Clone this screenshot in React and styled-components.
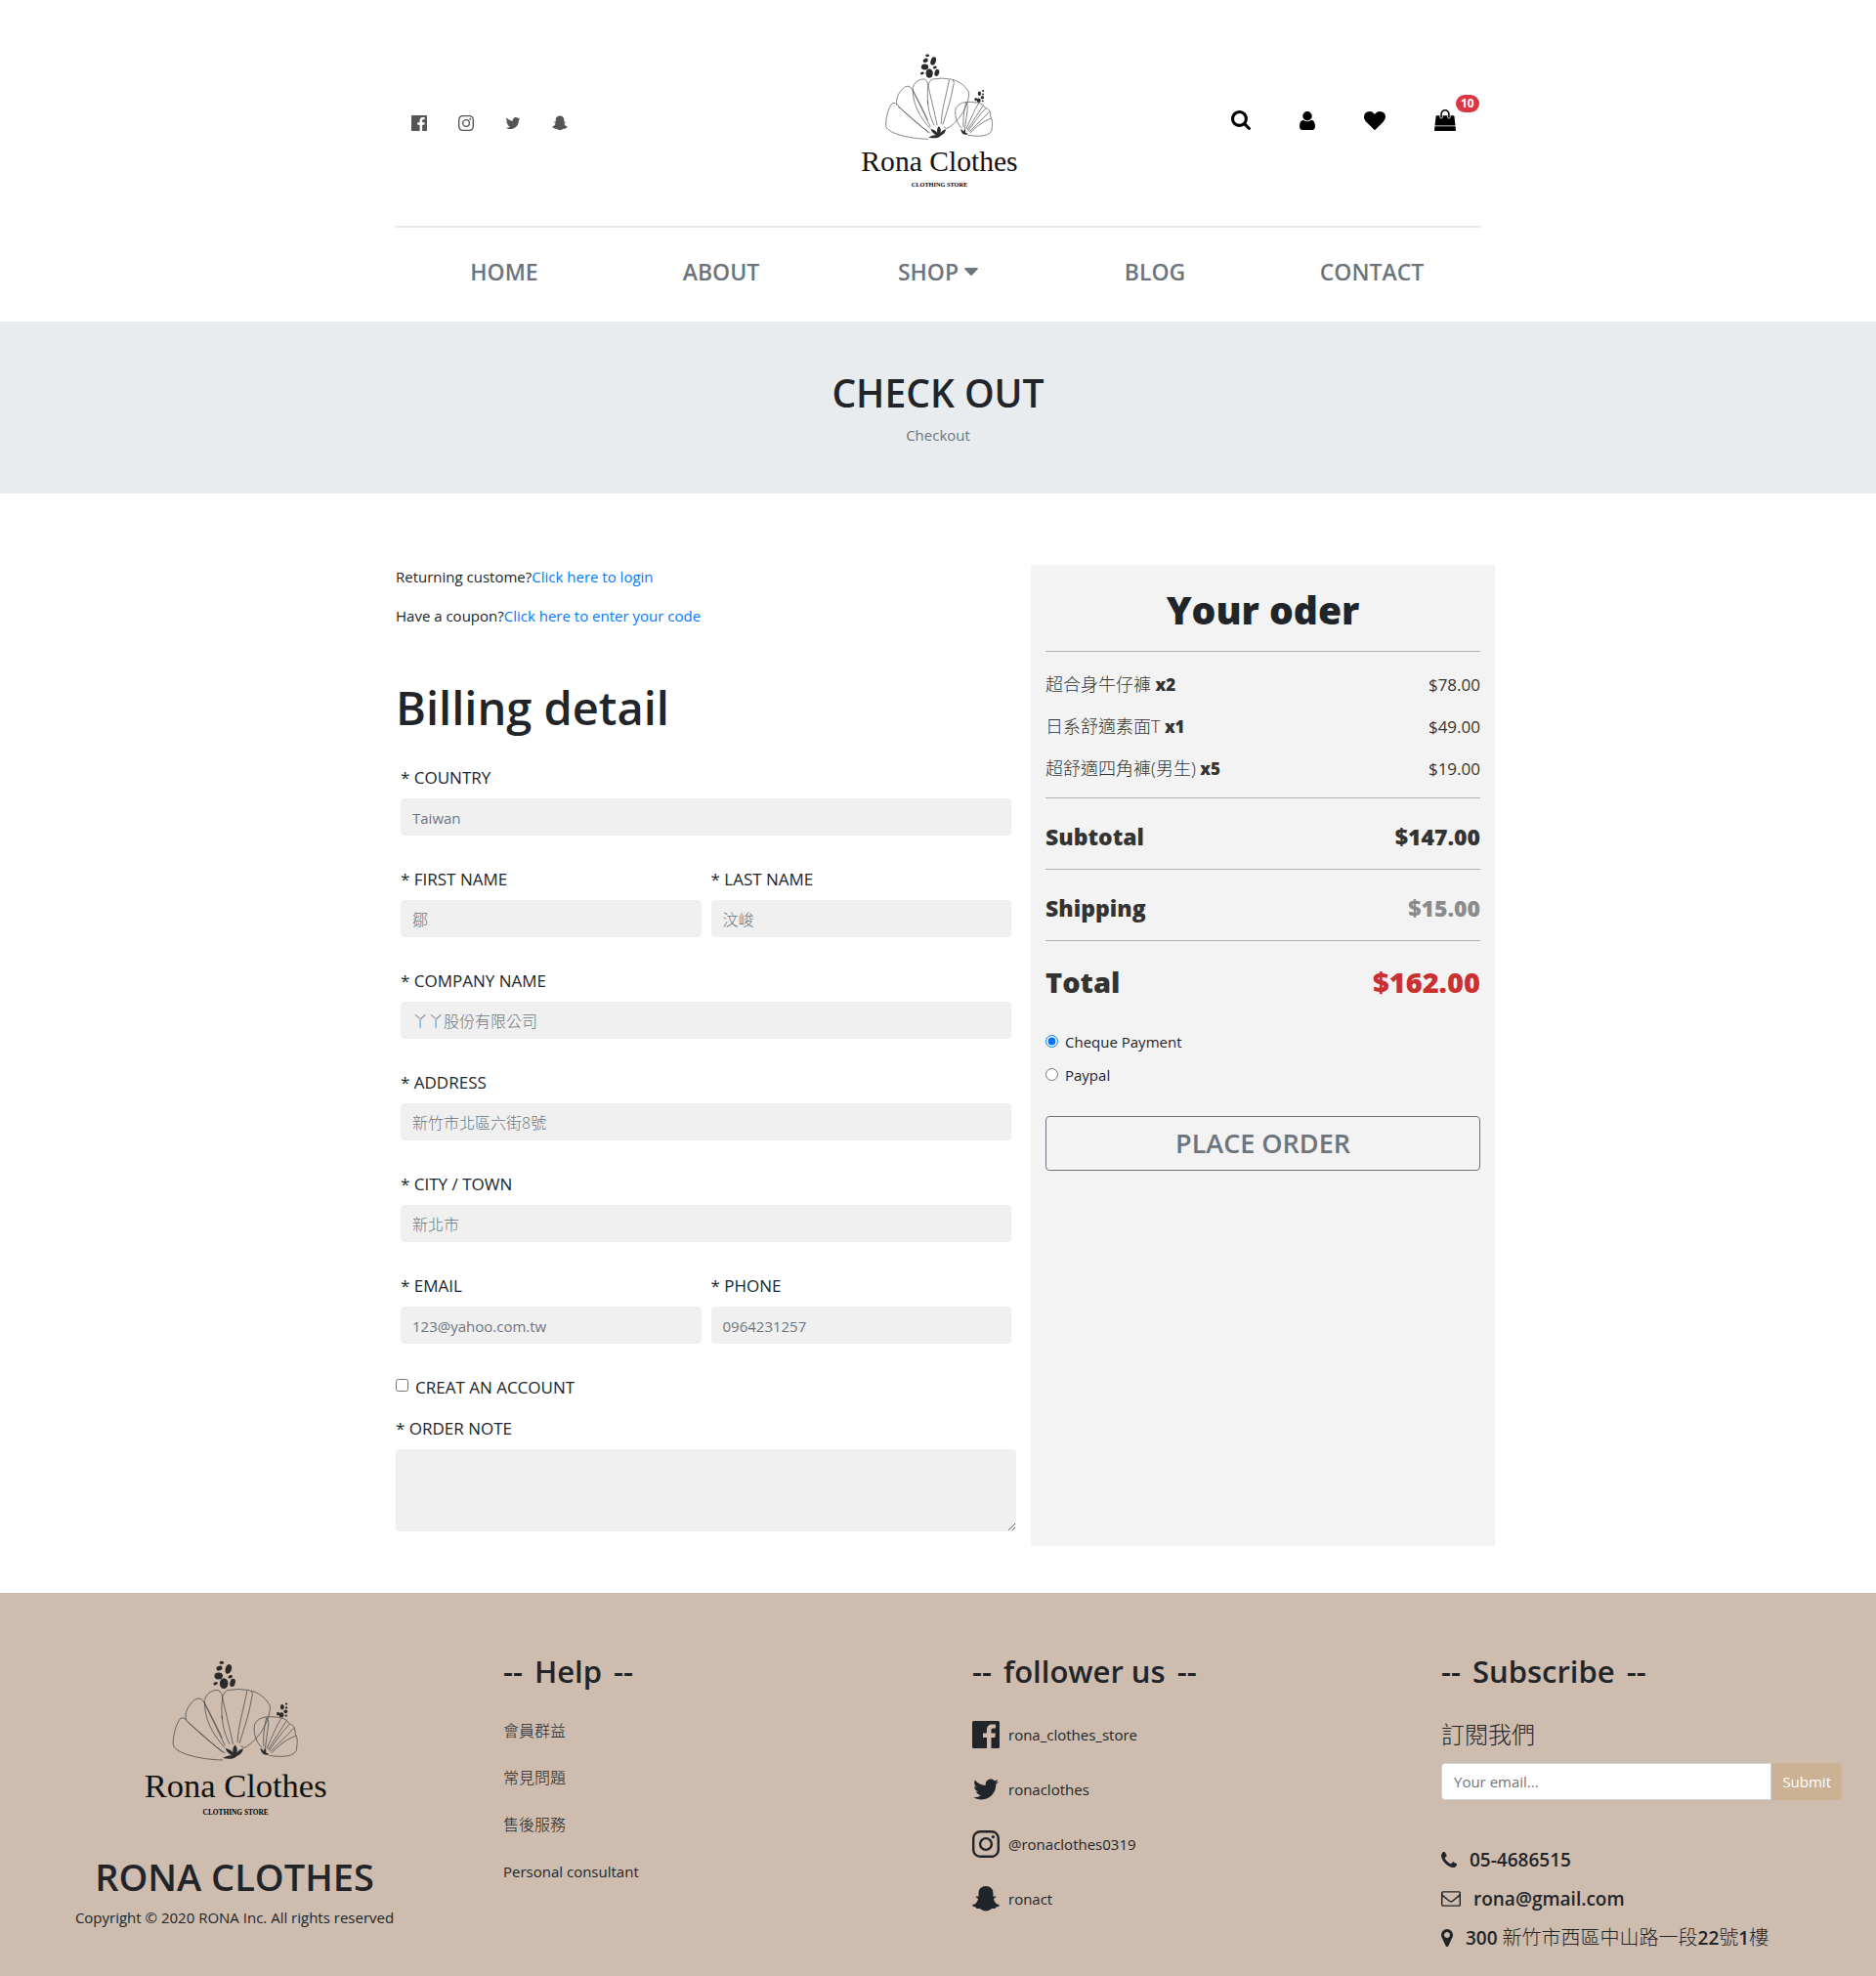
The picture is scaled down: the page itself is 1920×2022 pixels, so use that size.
import React, { useState } from "react";
import styled, { createGlobalStyle } from "styled-components";
import { IoLogoTwitter } from "react-icons/io";

const GlobalStyle = createGlobalStyle`
  *, *::before, *::after { box-sizing: border-box; }
  body {
    margin: 0;
    background: #fff;
    color: #212529;
    font-family: "Segoe UI", "Open Sans", "Noto Sans CJK TC", sans-serif;
    font-size: 15px;
    line-height: 24px;
  }
  h1, h2, h3, p, ul { margin: 0; padding: 0; }
  ul { list-style: none; }
  a { color: inherit; text-decoration: none; }
  button, input, textarea { font: inherit; }
`;

/* ---------- drawings ---------- */

const glyphs = {
  search: {
    box: "64 128 1664 1664",
    d: "M1216 832q0-185-131.5-316.5t-316.5-131.5-316.5 131.5-131.5 316.5 131.5 316.5 316.5 131.5 316.5-131.5 131.5-316.5zm512 832q0 52-38 90t-90 38q-54 0-90-38l-343-342q-179 124-399 124-143 0-273.5-55.5t-225-150-150-225-55.5-273.5 55.5-273.5 150-225 225-150 273.5-55.5 273.5 55.5 225 150 150 225 55.5 273.5q0 220-124 399l343 343q37 37 37 90z",
  },
  user: {
    box: "256 128 1280 1536",
    d: "M1536 1399q0 109-62.5 187t-150.5 78h-854q-88 0-150.5-78t-62.5-187q0-85 8.5-160.5t31.5-152 58.5-131 94-89 134.5-34.5q131 128 313 128t313-128q76 0 134.5 34.5t94 89 58.5 131 31.5 152 8.5 160.5zm-256-887q0 159-112.5 271.5t-271.5 112.5-271.5-112.5-112.5-271.5 112.5-271.5 271.5-112.5 271.5 112.5 112.5 271.5z",
  },
  heart: {
    box: "0 128 1792 1536",
    d: "M896 1664q-26 0-44-18l-624-602q-10-8-27.5-26t-55.5-65.5-68-97.5-53.5-121-23.5-138q0-220 127-344t351-124q62 0 126.5 21.5t120 58 95.5 68.5 76 68q36-36 76-68t95.5-68.5 120-58 126.5-21.5q224 0 351 124t127 344q0 221-229 450l-623 600q-18 18-44 18z",
  },
  bag: {
    box: "0 0 1792 1792",
    d: "M1757 1408l35 313q3 28-16 50-19 21-48 21h-1664q-29 0-48-21-19-22-16-50l35-313h1722zm-93-839l86 775h-1708l86-775q3-24 21-40.5t43-16.5h256v128q0 53 37.5 90.5t90.5 37.5 90.5-37.5 37.5-90.5v-128h384v128q0 53 37.5 90.5t90.5 37.5 90.5-37.5 37.5-90.5v-128h256q25 0 43 16.5t21 40.5zm-384-185v256q0 26-19 45t-45 19-45-19-19-45v-256q0-106-75-181t-181-75-181 75-75 181v256q0 26-19 45t-45 19-45-19-19-45v-256q0-159 112.5-271.5t271.5-112.5 271.5 112.5 112.5 271.5z",
  },
  phone: {
    box: "192 128 1408 1408",
    d: "M1600 1240q0 27-10 70.5t-21 68.5q-21 50-122 106-94 51-186 51-27 0-53-3.5t-57.5-12.5-47-14.5-55.5-20.5-49-18q-98-35-175-83-127-79-264-216t-216-264q-48-77-83-175-3-9-18-49t-20.5-55.5-14.5-47-12.5-57.5-3.5-53q0-92 51-186 56-101 106-122 25-11 68.5-21t70.5-10q14 0 21 3 18 6 53 76 11 19 30 54t35 63.5 31 53.5q3 4 17.5 25t21.5 35.5 7 28.5q0 20-28.5 50t-62 55-62 53-28.5 46q0 9 5 22.5t8.5 20.5 14 24 11.5 19q76 137 174 235t235 174q2 1 19 11.5t24 14 20.5 8.5 22.5 5q18 0 46-28.5t53-62 55-62 50-28.5q14 0 28.5 7t35.5 21.5 25 17.5q25 15 53.5 31t63.5 35 54 30q70 35 76 53 3 7 3 21z",
  },
  envelope: {
    box: "0 256 1792 1408",
    d: "M1664 1504v-768q-32 36-69 66-268 206-426 338-51 43-83 67t-86.5 48.5-102.5 24.5h-2q-48 0-102.5-24.5t-86.5-48.5-83-67q-158-132-426-338-37-30-69-66v768q0 13 9.5 22.5t22.5 9.5h1472q13 0 22.5-9.5t9.5-22.5zm0-1051v-24.5l-.5-13-3-12.5-5.5-9-9-7.5-14-2.5h-1472q-13 0-22.5 9.5t-9.5 22.5q0 168 147 284 193 152 401 317 6 5 35 29.5t46 37.5 44.5 31.5 50.5 27.5 43 9h2q20 0 43-9t50.5-27.5 44.5-31.5 46-37.5 35-29.5q208-165 401-317 54-43 100.5-115.5t46.5-131.5zm128-37v1088q0 66-47 113t-113 47h-1472q-66 0-113-47t-47-113v-1088q0-66 47-113t113-47h1472q66 0 113 47t47 113z",
  },
  marker: {
    box: "384 128 1024 1536",
    d: "M1152 640q0-106-75-181t-181-75-181 75-75 181 75 181 181 75 181-75 75-181zm256 0q0 109-33 179l-364 774q-16 33-47.5 52t-67.5 19-67.5-19-46.5-52l-365-774q-33-70-33-179 0-212 150-362t362-150 362 150 150 362z",
  },
};

const Svg = styled.svg`
  display: block;
  flex: none;
  fill: currentColor;
`;

function Glyph({ name, width, height }) {
  return (
    <Svg viewBox={glyphs[name].box} width={width} height={height} aria-hidden="true">
      <path d={glyphs[name].d} />
    </Svg>
  );
}

function Facebook() {
  return (
    <Svg viewBox="0 0 28 28" width="1em" height="1em" aria-hidden="true">
      <path
        fillRule="evenodd"
        d="M1.5 0h25A1.5 1.5 0 0 1 28 1.5v25a1.5 1.5 0 0 1-1.500 1.500h-7V17h3.800l.6-4.500h-4.400V9.800c0-1.300.5-2.200 2.300-2.200H24v-4c-.4-.1-1.800-.2-3.400-.2-3.400 0-5.700 2-5.700 5.800v3.300H11V17h4v11H1.500A1.500 1.500 0 0 1 0 26.500v-25A1.500 1.500 0 0 1 1.500 0z"
      />
    </Svg>
  );
}

function Instagram() {
  return (
    <Svg viewBox="0 0 28 28" width="1em" height="1em" aria-hidden="true">
      <g fill="none" stroke="currentColor" strokeWidth="2.400">
        <rect x="1.200" y="1.200" width="25.600" height="25.600" rx="7" />
        <circle cx="14" cy="14" r="5.900" />
      </g>
      <circle cx="21.400" cy="6.600" r="1.600" />
    </Svg>
  );
}

function Snapchat() {
  return (
    <Svg viewBox="0 -1 30 30" width="1em" height="1em" overflow="visible" aria-hidden="true">
      <path d="M15 0c4.800 0 8 3 8 8v3.500c1 .2 2-.6 3 .1.600 1-1.500 1.800-2.600 2.300.8 3.600 3 6 6.300 6.900.6.8-.9 1.900-3.700 2.400-.5.5-.3 1.500-1 1.500-1.500 0-3-.3-4.300.6C19 26.300 17.300 27.500 15 27.500s-4-1.200-5.700-2.200c-1.300-.9-2.800-.6-4.300-.6-.7 0-.5-1-1-1.500C1.200 22.700-.3 21.600.3 20.800 3.600 19.900 5.800 17.500 6.600 13.900 5.500 13.400 3.400 12.600 4 11.600c1-.7 2 .1 3-.1V8c0-5 3.200-8 8-8z" />
    </Svg>
  );
}

function Logo({ width, height }) {
  return (
    <Svg viewBox="56 40 490 420" width={width} height={height} role="img" aria-label="Rona Clothes">
      <g fill="#2b2b2b">
        <ellipse cx="267" cy="51" rx="6" ry="4" />
        <ellipse cx="261" cy="66" rx="8" ry="6" transform="rotate(-20 261 66)" />
        <ellipse cx="285" cy="68" rx="8" ry="13" transform="rotate(18 285 68)" />
        <ellipse cx="259" cy="86" rx="11" ry="9" />
        <ellipse cx="290" cy="88" rx="6" ry="4" transform="rotate(-20 290 88)" />
        <ellipse cx="251" cy="106" rx="6" ry="4" transform="rotate(-20 251 106)" />
        <ellipse cx="273" cy="106" rx="11" ry="14" />
        <ellipse cx="296" cy="104" rx="7" ry="11" transform="rotate(15 296 104)" />
        <ellipse cx="438" cy="160" rx="3" ry="3" />
        <ellipse cx="427" cy="168" rx="5" ry="7" />
        <ellipse cx="438" cy="170" rx="3" ry="3" />
        <ellipse cx="436" cy="180" rx="5" ry="5" />
        <ellipse cx="416" cy="186" rx="4" ry="5" />
        <ellipse cx="425" cy="189" rx="6" ry="7" />
        <ellipse cx="437" cy="191" rx="3" ry="3" />
        <path d="M270 303q16-9 24-7-14-8-17-19 15 3 20 12-2-13 5-21 9 9 5 21 8-10 17-11-2 14-16 19-10 12-38 6z" />
        <path d="M369 278q7 1 9 7l3-9q5 6 3 13 5 0 8 4-18 7-23-15z" />
      </g>
      <g fill="none" stroke="#4a4a4a" strokeWidth="2">
        <path d="M270 308C210 307 139 290 139 265C139 238 149 206 160 197Q168 194 176 206L270 288" />
        <path d="M176 206Q234 262 276 290" />
        <path d="M174 204C168 186 176 166 196 149Q211 139 221 156L276 270" />
        <path d="M221 156C244 200 258 226 268 250" />
        <path d="M222 150C226 136 234 130 243 126Q261 118 267 134C276 176 289 226 297 266" />
        <path d="M222 150C220 196 242 240 276 276" />
        <path d="M268 200C266 150 268 132 282 124Q310 118 340 124Q352 128 347 142C340 186 326 226 314 264" />
        <path d="M268 190C270 226 278 244 288 266M334 126C326 170 310 220 309 262" />
        <path d="M345 125C370 132 388 150 395 166C394 196 378 240 334 272Q324 280 318 270" />
        <path d="M374 276C356 260 350 232 354 214C366 190 396 192 424 197Q440 200 445 212C460 216 462 228 461 240C470 250 466 268 464 284C452 302 420 300 392 296" />
        <path d="M378 272C376 246 380 214 386 196Q394 204 388 232L382 278M386 278C400 246 412 218 424 199M438 205L390 280M392 284C414 252 430 230 446 214M458 224L396 286M398 290C420 268 440 252 464 244" />
      </g>
      <text x="304" y="405" textAnchor="middle" fontFamily="Liberation Serif, Times New Roman, serif" fontSize="89" fill="#111">
        Rona Clothes
      </text>
      <text x="304" y="453" textAnchor="middle" fontFamily="Liberation Serif, Times New Roman, serif" fontWeight="700" fontSize="19" fill="#000">
        CLOTHING STORE
      </text>
    </Svg>
  );
}

/* ---------- header ---------- */

const Container = styled.div`
  width: 100%;
  max-width: 1140px;
  margin: 0 auto;
  padding: 0 15px;
`;

const TopBar = styled.div`
  display: grid;
  grid-template-columns: 1fr auto 1fr;
  align-items: center;
  padding: 53px 0 38px;
  border-bottom: 2px solid #e6e6e6;
`;

const SocialLinks = styled.div`
  display: flex;
  gap: 32px;
  padding: 6px 0 0 16px;
  color: #555;
  font-size: 16px;

  svg { display: block; }
`;

const Actions = styled.div`
  display: flex;
  justify-content: flex-end;
  align-items: center;
  gap: 50px;
  padding-right: 25px;
  color: #000;
`;

const CartLink = styled.a`
  position: relative;
`;

const Badge = styled.span`
  position: absolute;
  left: 22px;
  top: -15px;
  padding: 0 5px;
  border-radius: 10px;
  background: #dc3545;
  color: #fff;
  font-size: 12px;
  font-weight: 700;
  line-height: 18px;
`;

const Nav = styled.nav`
  display: grid;
  grid-template-columns: repeat(5, 1fr);
  padding: 27px 0 33px;
`;

const NavLink = styled.a`
  display: flex;
  justify-content: center;
  align-items: center;
  gap: 6px;
  color: #6c757d;
  font-size: 23px;
  font-weight: 600;
  line-height: 36px;
`;

/* ---------- banner ---------- */

const Banner = styled.section`
  padding: 50px 15px 48px;
  background: #e8ecef;
  text-align: center;
`;

const Title = styled.h1`
  margin-bottom: 8px;
  font-size: 39px;
  font-weight: 600;
  line-height: 46px;
`;

const Crumb = styled.p`
  color: #6c757d;
`;

/* ---------- billing form ---------- */

const Checkout = styled.main`
  display: grid;
  grid-template-columns: 7fr 5fr;
  width: 100%;
  max-width: 1140px;
  margin: 0 auto;
  padding: 73px 0 48px;
`;

const Billing = styled.form`
  padding: 0 15px;
`;

const Hint = styled.p`
  margin-bottom: 16px;

  a { color: #007bff; }
`;

const BillingTitle = styled.h2`
  padding: 36px 0 28px;
  font-size: 47px;
  font-weight: 600;
  line-height: 60px;
`;

const FormRow = styled.div`
  display: flex;
  gap: 10px;
  padding: 0 5px 31px;
`;

const Field = styled.div`
  flex: 1 1 0;
  min-width: 0;
`;

const Label = styled.label`
  display: block;
  margin-bottom: 8px;
  font-size: 17px;
  line-height: 27px;
`;

const TextInput = styled.input`
  display: block;
  width: 100%;
  height: 38px;
  padding: 7px 12px 6px;
  border: 0;
  border-radius: 4px;
  background: #f0f0f0;
  color: #495057;
  font-size: ${(p) => (p.$cjk ? "16px" : "15px")};
  font-weight: ${(p) => (p.$cjk ? 300 : 400)};

  &::placeholder { color: #6c757d; opacity: 1; }
`;

const CheckRow = styled.div`
  display: flex;
  align-items: center;
  gap: 7px;
  margin-bottom: 15px;
  font-size: 17px;
  line-height: 27px;

  input { width: 13px; height: 13px; margin: 0 0 5px; }
`;

const Note = styled.textarea`
  display: block;
  width: 100%;
  height: 84px;
  margin-bottom: 15px;
  padding: 6px 12px;
  border: 0;
  border-radius: 4px;
  background: #f0f0f0;
  resize: vertical;
`;

/* ---------- order summary ---------- */

const Order = styled.aside`
  padding: 22px 15px;
  background: #f3f3f3;
  color: #333;
`;

const OrderTitle = styled.h2`
  padding-bottom: 18px;
  border-bottom: 1px solid #b0b0b0;
  color: #212529;
  font-size: 39px;
  font-weight: 800;
  line-height: 48px;
  text-align: center;
`;

const Items = styled.ul`
  display: grid;
  gap: 16px;
  padding: 20px 0 16px;
  border-bottom: 1px solid #b0b0b0;
  font-size: 17px;
  line-height: 27px;
`;

const Item = styled.li`
  display: flex;
  justify-content: space-between;
  height: 27px;

  b { font-weight: 800; }
`;

const Sum = styled.div`
  display: flex;
  justify-content: space-between;
  padding: 21px 0 15px;
  border-bottom: ${(p) => (p.$grand ? "0" : "1px solid #b0b0b0")};
  font-size: ${(p) => (p.$grand ? "29px" : "23px")};
  font-weight: 800;
  line-height: ${(p) => (p.$grand ? "42px" : "36px")};
`;

const Amount = styled.span`
  color: ${(p) => p.$color || "inherit"};
`;

const Payments = styled.div`
  display: grid;
  gap: 10px;
  padding: 13px 0 30px;
  color: #212529;
`;

const Payment = styled.label`
  display: flex;
  align-items: center;
  gap: 7px;

  input { width: 13px; height: 13px; margin: 0 0 2px; accent-color: #0075ff; }
`;

const PlaceOrder = styled.button`
  display: block;
  width: 100%;
  padding: 6px 12px;
  border: 1px solid #6c757d;
  border-radius: 4px;
  background: transparent;
  color: #6c757d;
  font-size: 27px;
  font-weight: 600;
  line-height: 42px;
`;

/* ---------- footer ---------- */

const Footer = styled.footer`
  display: grid;
  grid-template-columns: repeat(4, 1fr);
  padding: 61px 0 27px;
  background: #cebcae;
`;

const Column = styled.section`
  padding: 0 35px;
`;

const Brand = styled(Column)`
  display: flex;
  flex-direction: column;
  align-items: center;
  padding-top: 6px;
`;

const BrandName = styled.h2`
  margin: 36px 0 6px;
  font-size: 38px;
  font-weight: 600;
  line-height: 48px;
`;

const FooterTitle = styled.h3`
  display: flex;
  gap: 12px;
  margin-bottom: 30px;
  font-size: 31px;
  font-weight: 600;
  line-height: 38px;

  &::before, &::after { content: "--"; }
`;

const LinkList = styled.ul`
  display: grid;
  gap: 24px;
`;

const FollowLink = styled.a`
  display: flex;
  align-items: center;
  gap: 9px;
  line-height: 32px;

  svg { flex: none; font-size: 28px; }
`;

const Invite = styled.label`
  display: block;
  margin-bottom: 15px;
  font-family: "Noto Sans CJK TC", sans-serif;
  font-size: 24px;
  font-weight: 300;
  line-height: 30px;
`;

const Subscribe = styled.form`
  display: flex;
  margin-bottom: 49px;

  input {
    flex: 1;
    min-width: 0;
    height: 38px;
    padding: 6px 12px;
    border: 1px solid #ced4da;
    border-radius: 4px 0 0 4px;
    background: #fff;
  }
  input::placeholder { color: #6c757d; opacity: 1; }

  button {
    padding: 6px 11px;
    border: 0;
    border-radius: 0 4px 4px 0;
    background: #cbb294;
    color: #fff;
  }
`;

const Contacts = styled.ul`
  display: grid;
  gap: 16px;
  font-size: 19px;
  font-weight: 600;

  li { display: flex; align-items: center; gap: 13px; height: 24px; }
`;

const Cjk = styled.span`
  font-size: ${(p) => p.$size}px;
  font-weight: 300;
`;

/* ---------- content ---------- */

const fieldRows = [
  [{ id: "country", label: "COUNTRY", hint: "Taiwan" }],
  [
    { id: "first", label: "FIRST NAME", hint: "鄒", cjk: true },
    { id: "last", label: "LAST NAME", hint: "汶峻", cjk: true },
  ],
  [{ id: "company", label: "COMPANY NAME", hint: "丫丫股份有限公司", cjk: true }],
  [{ id: "address", label: "ADDRESS", hint: "新竹市北區六街8號", cjk: true }],
  [{ id: "city", label: "CITY / TOWN", hint: "新北市", cjk: true }],
  [
    { id: "email", label: "EMAIL", hint: "123@yahoo.com.tw", type: "email" },
    { id: "phone", label: "PHONE", hint: "0964231257", type: "tel" },
  ],
];

const items = [
  ["超合身牛仔褲", 2, "$78.00"],
  ["日系舒適素面T", 1, "$49.00"],
  ["超舒適四角褲(男生)", 5, "$19.00"],
];

const follows = [
  [Facebook, "rona_clothes_store"],
  [IoLogoTwitter, "ronaclothes"],
  [Instagram, "@ronaclothes0319"],
  [Snapchat, "ronact"],
];

export default function App() {
  const [payment, setPayment] = useState("cheque");

  return (
    <>
      <GlobalStyle />
      <Container as="header">
        <TopBar>
          <SocialLinks>
            <a href="#facebook" aria-label="Facebook"><Facebook /></a>
            <a href="#instagram" aria-label="Instagram"><Instagram /></a>
            <a href="#twitter" aria-label="Twitter"><IoLogoTwitter /></a>
            <a href="#snapchat" aria-label="Snapchat"><Snapchat /></a>
          </SocialLinks>
          <a href="#home" aria-label="Rona Clothes home"><Logo width={163} height={140} /></a>
          <Actions>
            <a href="#search" aria-label="Search"><Glyph name="search" width={20} height={20} /></a>
            <a href="#account" aria-label="Account"><Glyph name="user" width={16} height={19} /></a>
            <a href="#wishlist" aria-label="Wishlist"><Glyph name="heart" width={22} height={19} /></a>
            <CartLink href="#cart" aria-label="Cart">
              <Glyph name="bag" width={22} height={22} />
              <Badge>10</Badge>
            </CartLink>
          </Actions>
        </TopBar>
        <Nav>
          <NavLink href="#home">HOME</NavLink>
          <NavLink href="#about">ABOUT</NavLink>
          <NavLink href="#shop">
            SHOP
            <Svg viewBox="0 0 14 8" width="14" height="8" aria-hidden="true">
              <path d="M1 0h12q1.500.3.500 1.500L8 7.500q-1 .8-2 0L.5 1.500Q-.5.300 1 0z" />
            </Svg>
          </NavLink>
          <NavLink href="#blog">BLOG</NavLink>
          <NavLink href="#contact">CONTACT</NavLink>
        </Nav>
      </Container>

      <Banner>
        <Title>CHECK OUT</Title>
        <Crumb>Checkout</Crumb>
      </Banner>

      <Checkout>
        <Billing onSubmit={(e) => e.preventDefault()}>
          <Hint>Returning custome?<a href="#login">Click here to login</a></Hint>
          <Hint>Have a coupon?<a href="#coupon">Click here to enter your code</a></Hint>
          <BillingTitle>Billing detail</BillingTitle>
          {fieldRows.map((row) => (
            <FormRow key={row[0].id}>
              {row.map((f) => (
                <Field key={f.id}>
                  <Label htmlFor={f.id}>* {f.label}</Label>
                  <TextInput id={f.id} type={f.type || "text"} placeholder={f.hint} $cjk={f.cjk} />
                </Field>
              ))}
            </FormRow>
          ))}
          <CheckRow>
            <input id="create" type="checkbox" />
            <label htmlFor="create">CREAT AN ACCOUNT</label>
          </CheckRow>
          <Label htmlFor="note">* ORDER NOTE</Label>
          <Note id="note" />
        </Billing>

        <Order>
          <OrderTitle>Your oder</OrderTitle>
          <Items>
            {items.map(([name, count, price]) => (
              <Item key={name}>
                <span><Cjk $size={18}>{name}</Cjk> <b>x{count}</b></span>
                <span>{price}</span>
              </Item>
            ))}
          </Items>
          <Sum><span>Subtotal</span><Amount>$147.00</Amount></Sum>
          <Sum><span>Shipping</span><Amount $color="#8b8b8b">$15.00</Amount></Sum>
          <Sum $grand><span>Total</span><Amount $color="#c9302f">$162.00</Amount></Sum>
          <Payments>
            <Payment>
              <input type="radio" name="payment" checked={payment === "cheque"} onChange={() => setPayment("cheque")} />
              Cheque Payment
            </Payment>
            <Payment>
              <input type="radio" name="payment" checked={payment === "paypal"} onChange={() => setPayment("paypal")} />
              Paypal
            </Payment>
          </Payments>
          <PlaceOrder type="button">PLACE ORDER</PlaceOrder>
        </Order>
      </Checkout>

      <Footer>
        <Brand>
          <Logo width={190} height={163} />
          <BrandName>RONA CLOTHES</BrandName>
          <p>Copyright © 2020 RONA Inc. All rights reserved</p>
        </Brand>
        <Column>
          <FooterTitle>Help</FooterTitle>
          <LinkList>
            <li><a href="#members"><Cjk $size={16}>會員群益</Cjk></a></li>
            <li><a href="#faq"><Cjk $size={16}>常見問題</Cjk></a></li>
            <li><a href="#service"><Cjk $size={16}>售後服務</Cjk></a></li>
            <li><a href="#consultant">Personal consultant</a></li>
          </LinkList>
        </Column>
        <Column>
          <FooterTitle>follower us</FooterTitle>
          <LinkList>
            {follows.map(([Icon, name]) => (
              <li key={name}><FollowLink href={"#" + name}><Icon />{name}</FollowLink></li>
            ))}
          </LinkList>
        </Column>
        <Column>
          <FooterTitle>Subscribe</FooterTitle>
          <Invite htmlFor="subscribe">訂閱我們</Invite>
          <Subscribe onSubmit={(e) => e.preventDefault()}>
            <input id="subscribe" type="email" placeholder="Your email..." />
            <button type="submit">Submit</button>
          </Subscribe>
          <Contacts>
            <li><Glyph name="phone" width={16} height={16} />05-4686515</li>
            <li><Glyph name="envelope" width={20} height={16} />rona@gmail.com</li>
            <li>
              <Glyph name="marker" width={12} height={18} />
              <span>
                300 <Cjk $size={20}>新竹市西區中山路一段</Cjk>22<Cjk $size={20}>號</Cjk>1<Cjk $size={20}>樓</Cjk>
              </span>
            </li>
          </Contacts>
        </Column>
      </Footer>
    </>
  );
}
